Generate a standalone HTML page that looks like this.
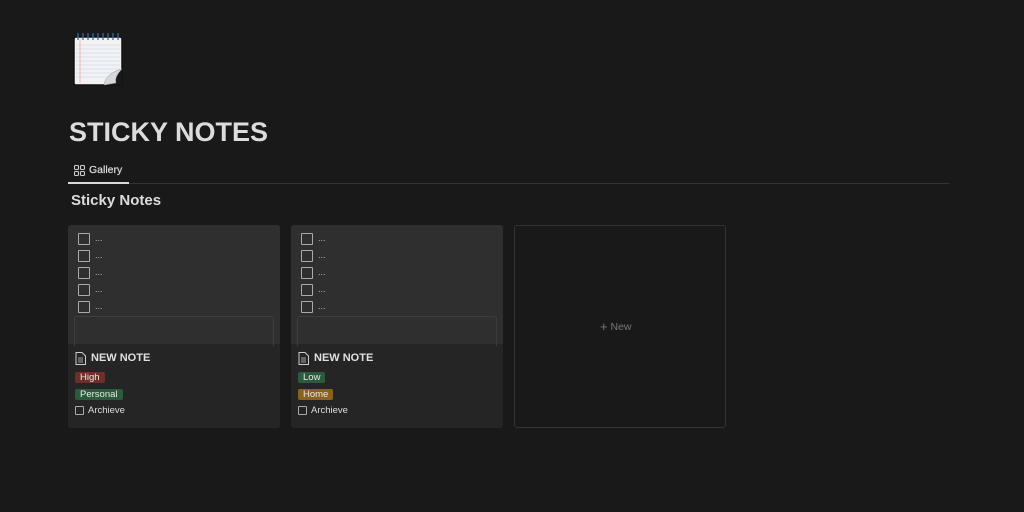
<!DOCTYPE html>
<html><head><meta charset="utf-8"><style>
*{margin:0;padding:0;box-sizing:border-box}
body{width:1024px;height:512px;background:#191919;font-family:"Liberation Sans",sans-serif;color:#d4d4d4;position:relative;overflow:hidden}
.a{position:absolute}
.card{position:absolute;top:225px;width:212px;height:203px;background:#252525;border-radius:3px;overflow:hidden}
.prev{position:absolute;left:0;top:0;width:212px;height:119px;background:#2f2f2f}
.cb{position:absolute;left:10px;width:12px;height:12px;border:1.5px solid #aaa;border-radius:1px}
.dots{position:absolute;left:27px;font-size:9px;color:#bbb}
.inner{position:absolute;left:6px;top:91px;width:200px;height:30px;border:1px solid #3d3d3d;border-bottom:none;border-radius:3px 3px 0 0}
.title{position:absolute;left:23px;top:127px;font-size:11px;font-weight:bold;color:#e0e0e0}
.tag{position:absolute;left:7px;height:11px;padding:0 5px;border-radius:2px;font-size:9.5px;line-height:11px;color:#e8e8e8}
.arc{position:absolute;left:20px;top:180px;font-size:9.5px;color:#ddd}
</style></head><body>
<svg class="a" style="left:72px;top:31px" width="52" height="56" viewBox="0 0 52 56">
<rect x="2" y="6" width="48" height="48" rx="2" fill="#f2f2f2" stroke="#111" stroke-width="1.5"/>
<g stroke="#cfdceb" stroke-width="0.7"><line x1="4" y1="14" x2="48" y2="14"/><line x1="4" y1="18" x2="48" y2="18"/><line x1="4" y1="22" x2="48" y2="22"/><line x1="4" y1="26" x2="48" y2="26"/><line x1="4" y1="30" x2="48" y2="30"/><line x1="4" y1="34" x2="48" y2="34"/><line x1="4" y1="38" x2="48" y2="38"/><line x1="4" y1="42" x2="48" y2="42"/><line x1="4" y1="46" x2="48" y2="46"/></g>
<line x1="8" y1="8" x2="8" y2="52" stroke="#e8a0a0" stroke-width="0.7"/>
<g stroke="#3a6a9a" stroke-width="1.3"><line x1="6" y1="2" x2="6" y2="9"/><line x1="11" y1="2" x2="11" y2="9"/><line x1="16" y1="2" x2="16" y2="9"/><line x1="21" y1="2" x2="21" y2="9"/><line x1="26" y1="2" x2="26" y2="9"/><line x1="31" y1="2" x2="31" y2="9"/><line x1="36" y1="2" x2="36" y2="9"/><line x1="41" y1="2" x2="41" y2="9"/><line x1="46" y1="2" x2="46" y2="9"/></g>
<path d="M32 54 Q40 40 50 38 L50 52 Q50 54 48 54Z" fill="#191919"/>
<path d="M32 54 Q34 42 50 38 Q42 46 44 52Z" fill="#d8d8d8" stroke="#999" stroke-width="0.5"/>
</svg>
<div class="a" style="left:69px;top:117px;font-size:27px;font-weight:bold;color:#dcdcdc">STICKY NOTES</div>
<svg class="a" style="left:74px;top:165px" width="11" height="11" viewBox="0 0 11 11" fill="none" stroke="#ccc" stroke-width="1.1"><rect x="0.5" y="0.5" width="4" height="4" rx="1"/><rect x="6.5" y="0.5" width="4" height="4" rx="1"/><rect x="0.5" y="6.5" width="4" height="4" rx="1"/><rect x="6.5" y="6.5" width="4" height="4" rx="1"/></svg>
<div class="a" style="left:89px;top:164px;font-size:10.5px;color:#ddd;-webkit-text-stroke:0.2px #ddd">Gallery</div>
<div class="a" style="left:68px;top:183px;width:881px;height:1px;background:#333"></div>
<div class="a" style="left:68px;top:182px;width:61px;height:2px;background:#d8d8d8"></div>
<div class="a" style="left:71px;top:192px;font-size:15px;font-weight:bold;color:#dcdcdc">Sticky Notes</div>

<div class="card" style="left:68px">
<div class="prev">
<div class="cb" style="top:8px"></div><div class="dots" style="top:8px">...</div>
<div class="cb" style="top:25px"></div><div class="dots" style="top:25px">...</div>
<div class="cb" style="top:42px"></div><div class="dots" style="top:42px">...</div>
<div class="cb" style="top:59px"></div><div class="dots" style="top:59px">...</div>
<div class="cb" style="top:76px"></div><div class="dots" style="top:76px">...</div>
<div class="inner"></div></div>
<svg class="a" style="left:7px;top:127px" width="11" height="13" viewBox="0 0 11 13"><path d="M1 .5H7L10.5 4V12.5H1Z" fill="none" stroke="#ccc"/><path d="M3 6h5M3 8h5M3 10h5" stroke="#ccc" stroke-width=".8"/></svg>
<div class="title">NEW NOTE</div>
<div class="tag" style="top:147px;background:#6e2f2a">High</div>
<div class="tag" style="top:164px;background:#2b5a3d">Personal</div>
<div class="cb" style="left:7px;top:181px;width:9px;height:9px;border-width:1.2px"></div>
<div class="arc">Archieve</div>
</div>

<div class="card" style="left:291px">
<div class="prev">
<div class="cb" style="top:8px"></div><div class="dots" style="top:8px">...</div>
<div class="cb" style="top:25px"></div><div class="dots" style="top:25px">...</div>
<div class="cb" style="top:42px"></div><div class="dots" style="top:42px">...</div>
<div class="cb" style="top:59px"></div><div class="dots" style="top:59px">...</div>
<div class="cb" style="top:76px"></div><div class="dots" style="top:76px">...</div>
<div class="inner"></div></div>
<svg class="a" style="left:7px;top:127px" width="11" height="13" viewBox="0 0 11 13"><path d="M1 .5H7L10.5 4V12.5H1Z" fill="none" stroke="#ccc"/><path d="M3 6h5M3 8h5M3 10h5" stroke="#ccc" stroke-width=".8"/></svg>
<div class="title">NEW NOTE</div>
<div class="tag" style="top:147px;background:#2b5a3d">Low</div>
<div class="tag" style="top:164px;background:#8a6120">Home</div>
<div class="cb" style="left:7px;top:181px;width:9px;height:9px;border-width:1.2px"></div>
<div class="arc">Archieve</div>
</div>

<div class="a" style="left:514px;top:225px;width:212px;height:203px;border:1px solid #333;border-radius:3px"></div>
<div class="a" style="left:600px;top:319px;font-size:10.5px;color:#777"><span style="font-size:13px;vertical-align:-1px">+</span> New</div>
</body></html>
